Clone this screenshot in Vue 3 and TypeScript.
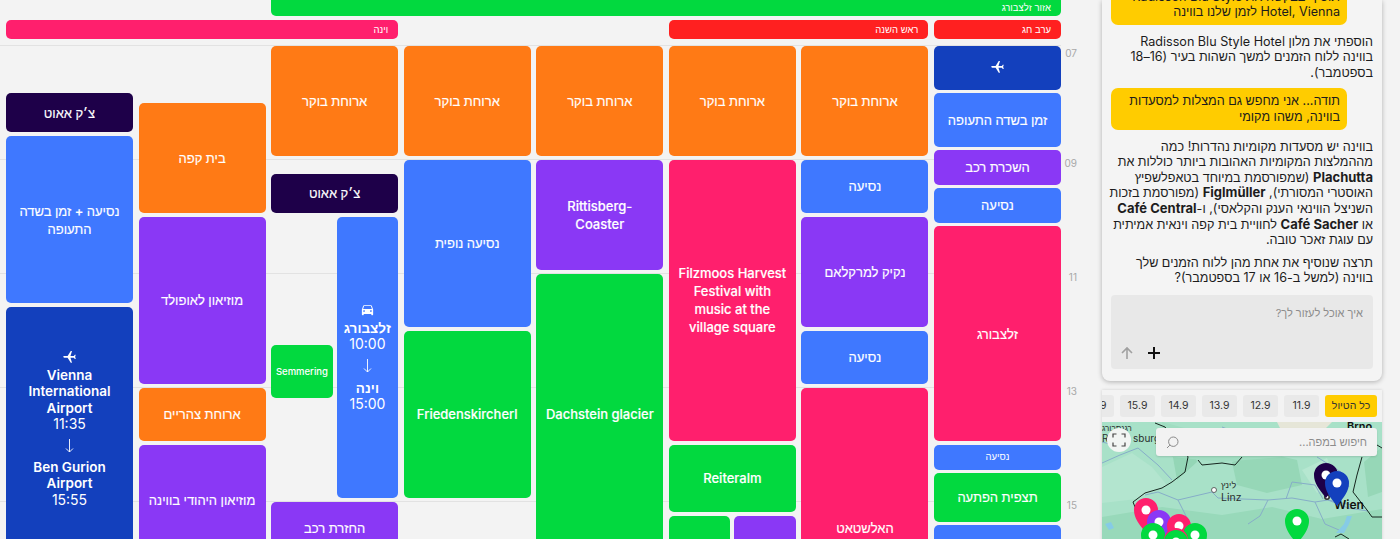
<template>
  <div class="page" dir="rtl">
    <aside class="side">
      <section class="chat">
        <div class="messages">
          <div class="bubble">תוסיף בבקשה את Radisson Blu Style<br />Hotel, Vienna לזמן שלנו בווינה</div>
          <p class="answer">הוספתי את מלון Radisson Blu Style Hotel בווינה ללוח הזמנים למשך השהות בעיר (16–18 בספטמבר).</p>
          <div class="bubble">תודה... אני מחפש גם המצלות למסעדות בווינה, משהו מקומי</div>
          <p class="answer">בווינה יש מסעדות מקומיות נהדרות! כמה מההמלצות המקומיות האהובות ביותר כוללות את <b>Plachutta</b> (שמפורסמת במיוחד בטאפלשפיץ האוסטרי המסורתי), <b>Figlmüller</b> (מפורסמת בזכות השניצל הווינאי הענק והקלאסי), ו-<b>Café Central</b> או <b>Café Sacher</b> לחוויית בית קפה וינאית אמיתית עם עוגת זאכר טובה.</p>
          <p class="answer tight">תרצה שנוסיף את אחת מהן ללוח הזמנים שלך בווינה (למשל ב-16 או 17 בספטמבר)?</p>
        </div>
        <div class="composer">
          <div class="placeholder">איך אוכל לעזור לך?</div>
          <div class="composer-actions">
            <svg class="plus" width="16" height="16" viewBox="0 0 16 16"><path d="M8 2v12M2 8h12" /></svg>
            <svg class="send" width="16" height="16" viewBox="0 0 16 16"><path d="M8 14V3M3 8l5-5 5 5" /></svg>
          </div>
        </div>
      </section>

      <section class="map-card">
        <div class="chips">
          <button v-for="(chip, i) in chips" :key="chip" class="chip" :class="{ active: i === 0 }">{{ chip }}</button>
        </div>
        <div class="map">
          <svg class="map-svg" width="280" height="117" viewBox="0 0 280 117">
            <rect width="280" height="117" fill="#a8e1c8" />
            <path d="M175 0h55l-8 8-30 3-14-5z" fill="#e6e6d8" />
            <path d="M0 45l30-14 20 14 15 18-30 14-35 4z" fill="#b3e5cf" />
            <path d="M70 30l20-15 5 25-20 18z" fill="#94d6b6" />
            <path d="M130 40l30-10 35 8 5 25-35 8-30-8z" fill="#96d7b7" />
            <path d="M200 48l25-12 10 25-20 10z" fill="#b6e7d1" />
            <path d="M0 95l60-10 60 8 50-8 50 12 60-10v30H0z" fill="#98d9ba" />
            <path d="M262 40l18-15v45l-14 5z" fill="#96d7b7" />
            <path d="M60 0l30 8 60 2 30 25-60 5-50-5z" fill="#a0ddc1" />
            <g class="river">
              <path d="M0 41l18-8 18-7 20 17 14 15" />
              <path d="M43 73l13-3 20 8 34-8 6 6 50 2 24-2 23 4 13-2 24 5" />
              <path d="M190 60l23 3 8 14M190 60l-6 17" />
              <path d="M76 78l10 20 4 19M166 78l-8 16-12 8M213 80l10 22 14 6M226 78l20 8 20 3" />
              <path d="M0 20l25 6M247 65l-8-15-24-15M120 5l30 12" />
            </g>
            <path d="M262 108l-8 9h8l5-9 3-8h-5z" fill="#86cbe6" transform="translate(-20 -6)" />
            <path d="M3 102l6-2 3 6-5 2z" fill="#86cbe6" />
            <g class="border">
              <path d="M53 1l10 4 8 10 10 8 5 12-3 15-13 10-10 6-17 5-12 9 4 10" />
              <path d="M96 38l4 5 20-2 13 2 7-8" />
              <path d="M275 23l5 3M260 35l-5 18-4 17 14 18 5 7h10M233 115l6-3 8 5" />
            </g>
            <circle cx="112" cy="68" r="2.5" fill="#fff" stroke="#444" stroke-width=".8" />
            <text class="place" x="119" y="66" font-size="9">לינץ</text>
            <text class="place" x="119" y="79" font-size="10.5">Linz</text>
            <text class="place strong" x="245" y="8" font-size="11">Brno</text>
            <text class="place" x="0" y="20" font-size="10">R</text>
            <text class="place" x="31" y="20" font-size="10">sburg</text>
            <text class="place" x="0" y="9" font-size="8">רגנסבורג</text>
            <text class="place strong" x="232" y="87" font-size="12">Wien</text>
            <circle cx="225" cy="75" r="3" fill="#333" />
            <circle cx="225" cy="75" r="1.4" fill="#fff" />
            <g v-for="pin in pins" :key="pin.x + '-' + pin.y + pin.color" :transform="`translate(${pin.x} ${pin.y})`">
              <path d="M0 23C-7 14-12 8-12 0a12 12 0 0 1 24 0c0 8-5 14-12 23z" :fill="pin.color" />
              <circle r="4.5" fill="#fff" />
            </g>
          </svg>
          <button class="fullscreen" aria-label="מסך מלא">
            <svg width="14" height="14" viewBox="0 0 14 14"><path d="M1 4.5V1h3.5M9.5 1H13v3.5M13 9.5V13H9.5M4.5 13H1V9.5" /></svg>
          </button>
          <div class="search">
            <span>חיפוש במפה...</span>
            <svg width="13" height="13" viewBox="0 0 13 13"><circle cx="7.3" cy="5.7" r="4.7" /><path d="M3.9 9.1L1 12" /></svg>
          </div>
        </div>
      </section>
    </aside>

    <main class="calendar">
      <div class="all-day">
        <div v-for="bar in allDay" :key="bar.label" class="bar" :style="barStyle(bar)">{{ bar.label }}</div>
      </div>
      <div class="body">
        <div class="hours">
          <div v-for="h in hours" :key="h" class="hour"><span>{{ h }}</span></div>
        </div>
        <div class="days">
          <div v-for="(day, d) in days" :key="d" class="day">
            <div
              v-for="ev in day"
              :key="ev.from + ev.color"
              class="event"
              :class="[ev.color, ev.size, ev.side]"
              :style="{ gridRow: `${ev.from + 1} / ${ev.to + 1}` }"
            >
              <template v-if="ev.trip">
                <svg class="trip-icon" width="15" height="15" viewBox="0 0 24 24"><path :d="icons[ev.trip.icon]" :transform="ev.trip.icon === 'plane' ? 'rotate(-90 12 12)' : ''" /></svg>
                <div v-if="ev.trip.start" class="stop">{{ ev.trip.start }}</div>
                <div v-if="ev.trip.startTime" class="time">{{ ev.trip.startTime }}</div>
                <div v-if="ev.trip.end" class="arrow">
                  <svg width="9" height="14" viewBox="0 0 9 14"><path d="M4.5 0v13M1 9.5l3.5 3.5L8 9.5" /></svg>
                </div>
                <div v-if="ev.trip.end" class="stop">{{ ev.trip.end }}</div>
                <div v-if="ev.trip.endTime" class="time">{{ ev.trip.endTime }}</div>
              </template>
              <div v-else class="label">{{ ev.label }}</div>
            </div>
          </div>
        </div>
      </div>
    </main>
  </div>
</template>

<script setup lang="ts">
interface Trip {
  icon: 'plane' | 'car'
  start?: string
  startTime?: string
  end?: string
  endTime?: string
}

interface CalEvent {
  // slots of 5 minutes counted from 07:00
  from: number
  to: number
  color: string
  label?: string
  size?: 'tiny'
  side?: 'half-a' | 'half-b'
  trip?: Trip
}

const icons = {
  plane: 'M21 16v-2l-8-5V3.5c0-.83-.67-1.5-1.5-1.5S10 2.67 10 3.5V9l-8 5v2l8-2.5V19l-2 1.5V22l3.5-1 3.5 1v-1.5L13 19v-5.5l8 2.5z',
  car: 'M18.92 6.01C18.72 5.42 18.16 5 17.5 5h-11c-.66 0-1.21.42-1.42 1.01L3 12v8c0 .55.45 1 1 1h1c.55 0 1-.45 1-1v-1h12v1c0 .55.45 1 1 1h1c.55 0 1-.45 1-1v-8l-2.08-5.99zM6.5 16c-.83 0-1.5-.67-1.5-1.5S5.67 13 6.5 13s1.5.67 1.5 1.5S7.33 16 6.5 16zm11 0c-.83 0-1.5-.67-1.5-1.5s.67-1.5 1.5-1.5 1.5.67 1.5 1.5-.67 1.5-1.5 1.5zM5 11l1.5-4.5h11L19 11H5z',
}

const chips = ['כל הטיול', '11.9', '12.9', '13.9', '14.9', '15.9', '16.9']
const hours = ['07', '09', '11', '13', '15']

const allDay = [
  { label: 'אזור זלצבורג', color: 'green', col: 1, span: 6, row: 1 },
  { label: 'ערב חג', color: 'red', col: 1, span: 1, row: 2 },
  { label: 'ראש השנה', color: 'red', col: 2, span: 2, row: 2 },
  { label: 'וינה', color: 'pink', col: 6, span: 3, row: 2 },
]

const barColors: Record<string, string> = { green: '#02d93f', red: '#ff2020', pink: '#ff1f6d' }

const barStyle = (bar: (typeof allDay)[number]) => ({
  gridColumn: `${bar.col} / span ${bar.span}`,
  gridRow: bar.row,
  backgroundColor: barColors[bar.color],
})

const breakfast = 'ארוחת בוקר'
const drive = 'נסיעה'

// first day is the rightmost column
const days: CalEvent[][] = [
  [
    { from: 0, to: 10, color: 'navy', trip: { icon: 'plane' } },
    { from: 10, to: 22, color: 'blue', label: 'זמן בשדה התעופה' },
    { from: 22, to: 30, color: 'purple', label: 'השכרת רכב' },
    { from: 30, to: 38, color: 'blue', label: drive },
    { from: 38, to: 84, color: 'pink', label: 'זלצבורג' },
    { from: 84, to: 90, color: 'blue', label: drive, size: 'tiny' },
    { from: 90, to: 101, color: 'green', label: 'תצפית הפתעה' },
    { from: 101, to: 125, color: 'blue', label: drive },
  ],
  [
    { from: 0, to: 24, color: 'orange', label: breakfast },
    { from: 24, to: 36, color: 'blue', label: drive },
    { from: 36, to: 60, color: 'purple', label: 'נקיק למרקלאם' },
    { from: 60, to: 72, color: 'blue', label: drive },
    { from: 72, to: 132, color: 'pink', label: 'האלשטאט' },
  ],
  [
    { from: 0, to: 24, color: 'orange', label: breakfast },
    { from: 24, to: 84, color: 'pink', label: 'Filzmoos Harvest Festival with music at the village square' },
    { from: 84, to: 99, color: 'green', label: 'Reiteralm' },
    { from: 99, to: 125, color: 'purple', side: 'half-a' },
    { from: 99, to: 125, color: 'green', side: 'half-b' },
  ],
  [
    { from: 0, to: 24, color: 'orange', label: breakfast },
    { from: 24, to: 48, color: 'purple', label: 'Rittisberg-\nCoaster' },
    { from: 48, to: 108, color: 'green', label: 'Dachstein glacier' },
  ],
  [
    { from: 0, to: 24, color: 'orange', label: breakfast },
    { from: 24, to: 60, color: 'blue', label: 'נסיעה נופית' },
    { from: 60, to: 96, color: 'green', label: 'Friedenskircherl' },
  ],
  [
    { from: 0, to: 24, color: 'orange', label: breakfast },
    { from: 27, to: 36, color: 'dark', label: 'צ׳ק אאוט' },
    {
      from: 36,
      to: 96,
      color: 'blue',
      side: 'half-a',
      trip: { icon: 'car', start: 'זלצבורג', startTime: '10:00', end: 'וינה', endTime: '15:00' },
    },
    { from: 63, to: 75, color: 'green', label: 'Semmering', side: 'half-b', size: 'tiny' },
    { from: 96, to: 108, color: 'purple', label: 'החזרת רכב' },
  ],
  [
    { from: 12, to: 36, color: 'orange', label: 'בית קפה' },
    { from: 36, to: 72, color: 'purple', label: 'מוזיאון לאופולד' },
    { from: 72, to: 84, color: 'orange', label: 'ארוחת צהריים' },
    { from: 84, to: 108, color: 'purple', label: 'מוזיאון היהודי בווינה' },
  ],
  [
    { from: 10, to: 19, color: 'dark', label: 'צ׳ק אאוט' },
    { from: 19, to: 55, color: 'blue', label: 'נסיעה + זמן בשדה התעופה' },
    {
      from: 55,
      to: 107,
      color: 'navy',
      trip: {
        icon: 'plane',
        start: 'Vienna\nInternational\nAirport',
        startTime: '11:35',
        end: 'Ben Gurion\nAirport',
        endTime: '15:55',
      },
    },
  ],
]

const pins = [
  { x: 44, y: 88, color: '#ff1f6d' },
  { x: 57, y: 100, color: '#8a38f5' },
  { x: 77, y: 104, color: '#ff1f6d' },
  { x: 51, y: 113, color: '#02d93f' },
  { x: 93, y: 113, color: '#02d93f' },
  { x: 74, y: 118, color: '#ff1f6d' },
  { x: 74, y: 120, color: '#02d93f' },
  { x: 195, y: 99, color: '#02d93f' },
  { x: 224, y: 53, color: '#1e0049' },
  { x: 235, y: 61, color: '#1340bd' },
]
</script>

<style>
html,
body {
  margin: 0;
  height: 539px;
  overflow: hidden;
  background: #f3f3f3;
}
</style>

<style scoped>
.page {
  display: flex;
  height: 539px;
  overflow: hidden;
  background: #f3f3f3;
  color: #1c1c1c;
  font-family: Inter, "Liberation Sans", sans-serif;
}

/* side panel */
.side {
  flex: none;
  width: 280px;
  margin-right: 18px;
  margin-left: 7px;
  display: flex;
  flex-direction: column;
  gap: 9px;
}

.chat {
  flex: none;
  height: 381px;
  display: flex;
  flex-direction: column;
  padding: 0 9px 12px;
  box-sizing: border-box;
  background: #f4f4f4;
  border-radius: 0 0 8px 8px;
  box-shadow: 0 1px 5px rgba(0, 0, 0, 0.28);
  overflow: hidden;
}

.messages {
  flex: 1;
  min-height: 0;
  display: flex;
  flex-direction: column;
  justify-content: flex-end;
  font-size: 12.6px;
  line-height: 15.6px;
}

.messages b {
  font-size: 13px;
  line-height: 1;
  font-weight: 700;
  white-space: nowrap;
}

.bubble {
  flex: none;
  margin-bottom: 9px;
  margin-inline-start: 26px;
  padding: 5px 7px;
  background: #ffcc00;
  border-radius: 7px;
}

.answer {
  flex: none;
  margin: 0 0 8px -4px;
}

.answer.tight {
  margin-top: -1px;
  margin-bottom: 9px;
}

.composer {
  flex: none;
  height: 74px;
  display: flex;
  flex-direction: column;
  justify-content: space-between;
  padding: 11px 10px 8px 8px;
  box-sizing: border-box;
  background: #e8e8e8;
  border-radius: 4px;
}

.placeholder {
  font-size: 11px;
  color: #8c8c8c;
}

.composer-actions {
  display: flex;
  justify-content: flex-end;
  gap: 11px;
}

.composer-actions svg {
  fill: none;
}

.plus path {
  stroke: #111;
  stroke-width: 2;
}

.send path {
  stroke: #a0a0a0;
  stroke-width: 1.6;
}

.map-card {
  flex: none;
  height: 160px;
  background: #f3f3f3;
  box-shadow: 0 0 3px rgba(0, 0, 0, 0.15);
  display: flex;
  flex-direction: column;
  overflow: hidden;
}

.chips {
  flex: none;
  height: 32px;
  display: flex;
  align-items: center;
  gap: 6px;
  padding-right: 5px;
  overflow: hidden;
}

.chip {
  flex: none;
  width: 35px;
  height: 22px;
  padding: 0;
  border: 0;
  border-radius: 3px;
  background: #e9e9e9;
  color: #333;
  font: 10.5px/22px Inter, "Liberation Sans", sans-serif;
}

.chip.active {
  background: #ffcc00;
  width: 52px;
}

.map {
  flex: 1;
  position: relative;
  overflow: hidden;
}

.map-svg {
  display: block;
  direction: ltr;
}

.river path {
  fill: none;
  stroke: #86adc8;
  stroke-width: 1;
}

.border path {
  fill: none;
  stroke: #16261f;
  stroke-width: 1;
}

.place {
  fill: #2a2f2d;
}

.place.strong {
  font-weight: 600;
  fill: #111;
}

.fullscreen {
  position: absolute;
  top: 6px;
  left: 5px;
  width: 24px;
  height: 24px;
  padding: 0;
  border: 0;
  border-radius: 50%;
  background: #f2f5f3;
  display: flex;
  align-items: center;
  justify-content: center;
}

.fullscreen path {
  fill: none;
  stroke: #444;
  stroke-width: 1.2;
}

.search {
  position: absolute;
  top: 6px;
  right: 5px;
  width: 221px;
  height: 28px;
  padding: 0 10px;
  box-sizing: border-box;
  display: flex;
  align-items: center;
  justify-content: space-between;
  background: #f2f2f2;
  border-radius: 3px;
  box-shadow: 0 1px 2px rgba(0, 0, 0, 0.12);
  font-size: 11px;
  color: #8c8c8c;
}

.search svg {
  fill: none;
  stroke: #8a8a8a;
  stroke-width: 1;
}

/* calendar */
.calendar {
  flex: 1;
  min-width: 0;
  padding: 0 34px 0 6px;
}

.all-day {
  display: grid;
  grid-template-columns: repeat(8, 1fr);
  grid-template-rows: 16px 19px;
  column-gap: 5.57px;
  row-gap: 4px;
  margin-bottom: 6px;
}

.bar {
  padding: 0 10px;
  font-size: 9.5px;
  line-height: 19px;
  color: #fff;
  border-radius: 5px;
}

.bar:first-child {
  line-height: 16px;
  border-radius: 0 0 5px 5px;
}

.body {
  position: relative;
  height: 494px;
}

.hours {
  position: absolute;
  inset: 0 0 0 -6px;
}

.hour {
  position: relative;
  height: 114px;
  box-sizing: border-box;
  border-top: 1px solid #e2e2e2;
}

.hour span {
  position: absolute;
  top: -3px;
  right: -16px;
  font-size: 10px;
  line-height: 12px;
  color: #a8a8a8;
}

.hour:first-child span {
  top: 1px;
}

.days {
  position: relative;
  display: grid;
  grid-template-columns: repeat(8, 1fr);
  column-gap: 5.57px;
  padding-top: 0.5px;
}

.day {
  display: grid;
  grid-template-columns: 1fr 1fr;
  grid-auto-rows: 4.75px;
  column-gap: 4px;
  min-width: 0;
  height: 494px;
}

.event {
  grid-column: 1 / -1;
  margin-bottom: 3.5px;
  padding: 0 8px;
  display: flex;
  flex-direction: column;
  align-items: center;
  justify-content: center;
  text-align: center;
  white-space: pre-line;
  font-size: 13px;
  font-weight: 500;
  line-height: 18px;
  color: #fff;
  border-radius: 5px;
  min-height: 0;
  -webkit-text-stroke: 0.15px #fff;
}

.label {
  unicode-bidi: plaintext;
}

.event.half-a {
  grid-column: 1;
  padding: 0 4px;
}

.event.half-b {
  grid-column: 2;
  padding: 0 2px;
}

.event.tiny {
  font-size: 9.5px;
  -webkit-text-stroke: 0;
}

.blue { background: #3f78ff; }
.purple { background: #8a38f5; }
.orange { background: #ff7a15; }
.pink { background: #ff1f6d; }
.green { background: #02d93f; }
.dark { background: #1e0049; }
.navy { background: #1340bd; }

.trip-icon {
  fill: #fff;
  flex: none;
  margin-bottom: 3px;
}

.stop {
  font-weight: 600;
  font-size: 13.5px;
  line-height: 16.3px;
  -webkit-text-stroke: 0;
}

.time {
  font-weight: 400;
  font-size: 14px;
  line-height: 16.3px;
  -webkit-text-stroke: 0;
}

.arrow {
  height: 27px;
  display: flex;
  align-items: center;
}

.arrow svg {
  fill: none;
  stroke: #fff;
  stroke-width: 0.9;
}
</style>
